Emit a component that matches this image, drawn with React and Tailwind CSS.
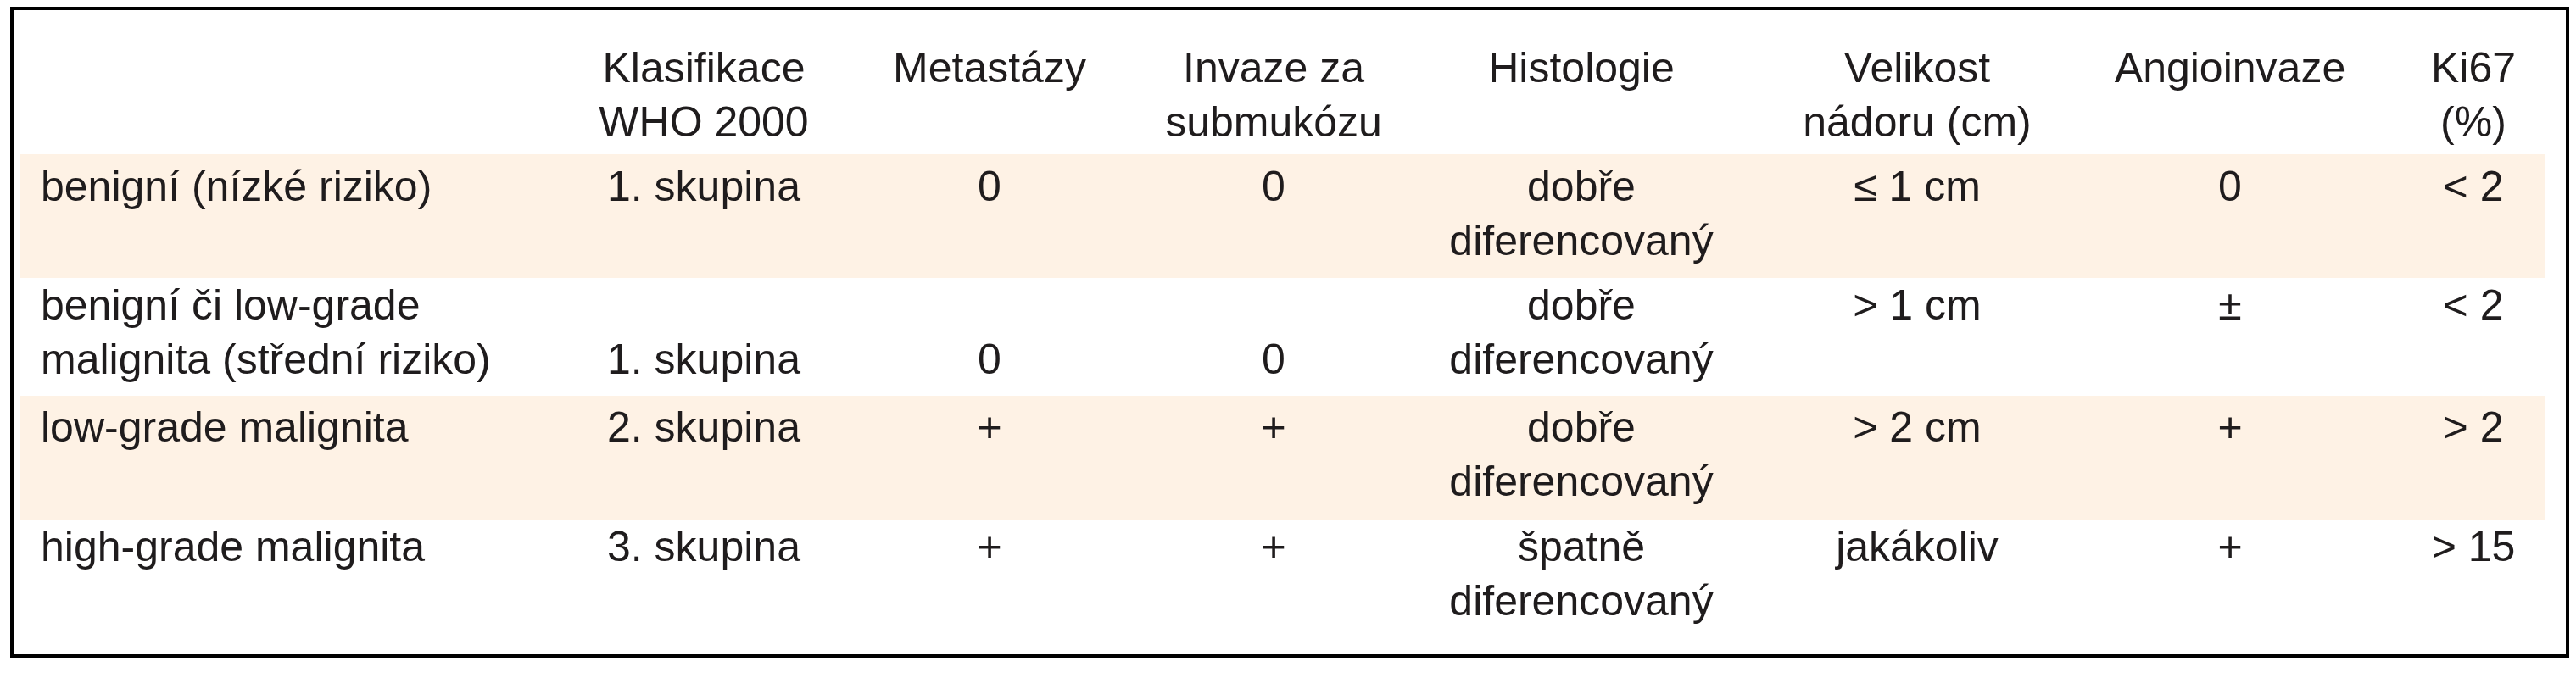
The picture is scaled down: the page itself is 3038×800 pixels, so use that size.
import React from 'react'

const columns = 'grid grid-cols-[673px_268px_406px_264px_462px_330px_408px_166px]'

const header = [
  [''],
  ['Klasifikace', 'WHO 2000'],
  ['Metastázy'],
  ['Invaze za', 'submukózu'],
  ['Histologie'],
  ['Velikost', 'nádoru (cm)'],
  ['Angioinvaze'],
  ['Ki67', '(%)'],
]

const rows = [
  {
    shaded: true,
    pad: 'pt-[6px] h-[146px]',
    cells: [
      ['benigní (nízké riziko)'],
      ['1. skupina'],
      ['0'],
      ['0'],
      ['dobře', 'diferencovaný'],
      ['≤ 1 cm'],
      ['0'],
      ['< 2'],
    ],
  },
  {
    shaded: false,
    pad: 'pt-0 h-[139px]',
    cells: [
      ['benigní či low-grade', 'malignita (střední riziko)'],
      ['', '1. skupina'],
      ['', '0'],
      ['', '0'],
      ['dobře', 'diferencovaný'],
      ['> 1 cm'],
      ['±'],
      ['< 2'],
    ],
  },
  {
    shaded: true,
    pad: 'pt-[5px] h-[146px]',
    cells: [
      ['low-grade malignita'],
      ['2. skupina'],
      ['+'],
      ['+'],
      ['dobře', 'diferencovaný'],
      ['> 2 cm'],
      ['+'],
      ['> 2'],
    ],
  },
  {
    shaded: false,
    pad: 'pt-0 h-[150px]',
    cells: [
      ['high-grade malignita'],
      ['3. skupina'],
      ['+'],
      ['+'],
      ['špatně', 'diferencovaný'],
      ['jakákoliv'],
      ['+'],
      ['> 15'],
    ],
  },
]

function Cell({ lines, first }) {
  return (
    <div className={first ? 'pl-[25px] text-left' : 'text-center'}>
      {lines.map((line, i) => (
        <div key={i} className="h-[64px] whitespace-nowrap leading-[64px]">
          {line === '' ? '\u00a0' : line}
        </div>
      ))}
    </div>
  )
}

export default function App() {
  return (
    <div className="min-h-[800px] w-[3038px] bg-white pl-[12px] pt-[8px]">
      <div
        className="h-[768px] w-[3018px] border-4 border-black pl-[7px] pr-[25px] text-[50px] text-[#1f1c1d]"
        style={{ fontFamily: '"Liberation Sans", Arial, sans-serif' }}
      >
        <div className={`${columns} h-[170px] pt-[36px]`}>
          {header.map((lines, i) => (
            <Cell key={i} lines={lines} first={i === 0} />
          ))}
        </div>
        {rows.map((row, r) => (
          <div key={r} className={`${columns} ${row.pad} ${row.shaded ? 'bg-[#fef2e5]' : 'bg-white'}`}>
            {row.cells.map((lines, i) => (
              <Cell key={i} lines={lines} first={i === 0} />
            ))}
          </div>
        ))}
      </div>
    </div>
  )
}
